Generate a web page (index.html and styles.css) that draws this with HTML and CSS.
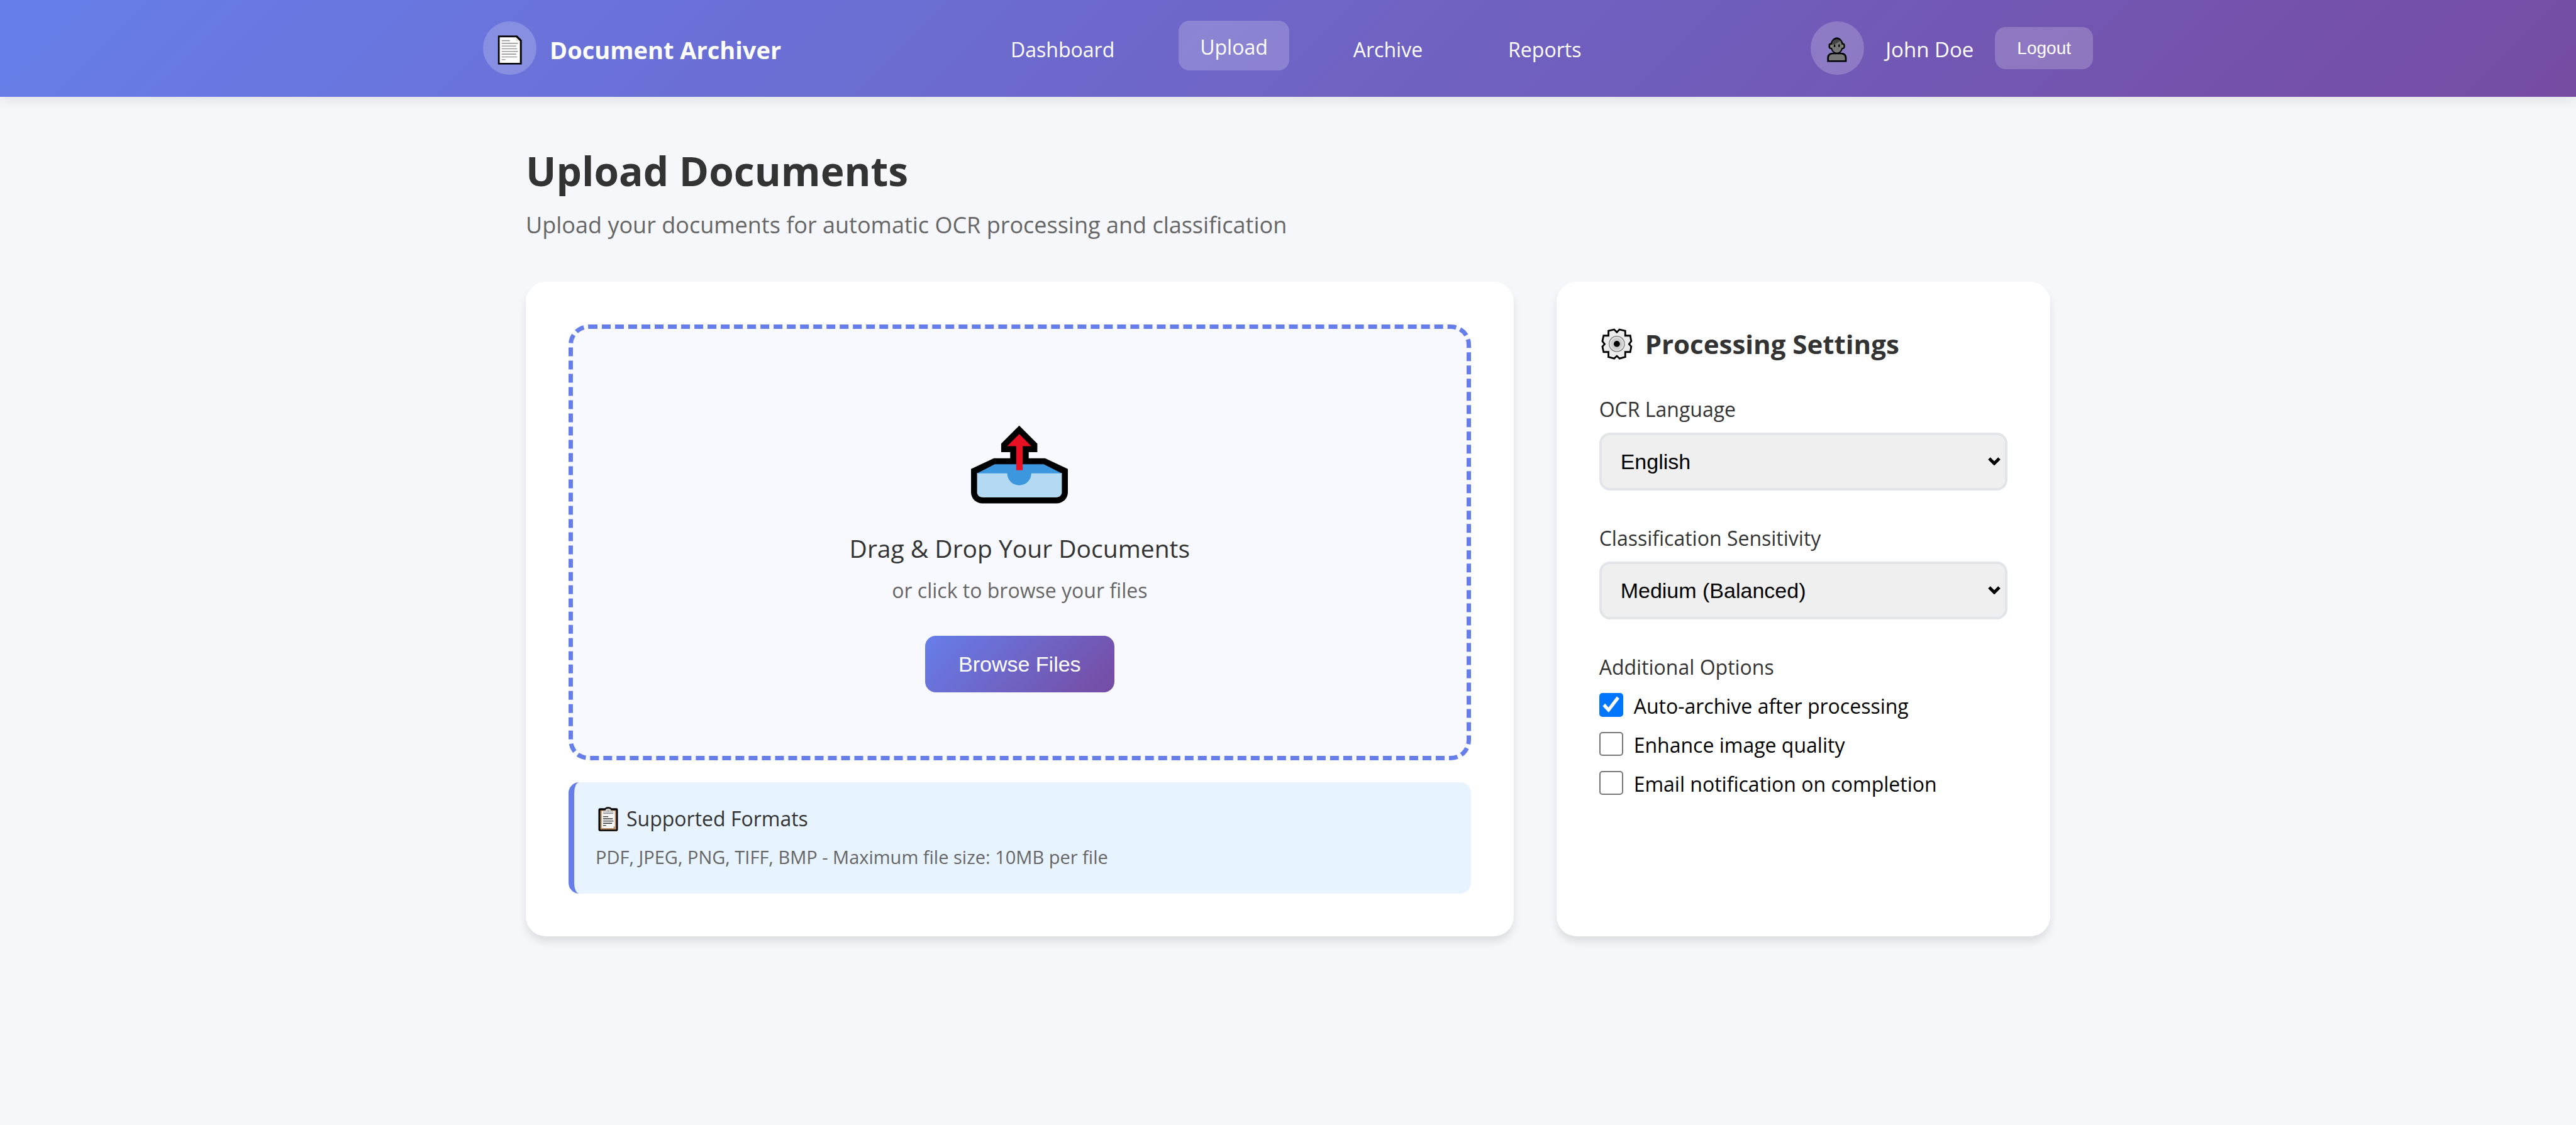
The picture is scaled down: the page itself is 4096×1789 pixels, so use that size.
FILE: index.html
```html
<!DOCTYPE html>
<html lang="en">
<head>
<meta charset="utf-8">
<meta name="viewport" content="width=device-width, initial-scale=1">
<title>Document Archiver - Upload</title>
<link rel="stylesheet" href="styles.css">
</head>
<body>
<header class="header">
  <div class="header-inner">
    <div class="logo">
      <span class="round-icon">
        <svg viewBox="75 59 375 375" aria-hidden="true">
          <path d="M180 158H315L347 190V361H180Z"/>
          <path fill="#fff" d="M192 170H306L334 198V350H192Z"/>
          <path fill="#e4e4d8" d="M306 170V198H334Z"/>
          <path stroke="#9a9a9a" stroke-width="7" d="M206 194h58M206 213h114M206 232h102M206 251h108M206 270h114M206 289h102M206 308h108M206 327h26"/>
        </svg>
      </span>
      <span class="logo-text">Document Archiver</span>
    </div>
    <nav class="nav">
      <a class="nav-link" href="#">Dashboard</a>
      <a class="nav-link active" href="#">Upload</a>
      <a class="nav-link" href="#">Archive</a>
      <a class="nav-link" href="#">Reports</a>
    </nav>
    <div class="user">
      <span class="round-icon">
        <svg viewBox="32 30 375 375" aria-hidden="true">
          <ellipse cx="216" cy="200" rx="45" ry="57"/>
          <rect x="158" y="182" width="115" height="42" rx="16"/>
          <path d="M148 315V286C148 264 164 250 188 250H245C269 250 285 264 285 286V315Z"/>
          <rect x="169" y="193" width="94" height="22" rx="5" fill="#828278"/>
          <ellipse cx="216" cy="203" rx="36" ry="47" fill="#777"/>
          <path fill="#777" d="M160 303V287C160 270 172 261 190 261H243C261 261 273 270 273 287V303Z"/>
          <path fill="#444" d="M181 193C181 168 196 156 216 156C233 156 245 164 250 178L237 168C222 180 206 191 181 193Z"/>
          <rect x="195" y="191" width="10" height="19" rx="4"/>
          <rect x="227" y="191" width="10" height="19" rx="4"/>
        </svg>
      </span>
      <span class="user-name">John Doe</span>
      <button class="logout" type="button">Logout</button>
    </div>
  </div>
</header>

<main class="main">
  <h1 class="title">Upload Documents</h1>
  <p class="subtitle">Upload your documents for automatic OCR processing and classification</p>

  <div class="grid">
    <section class="card">
      <div class="dropzone">
        <svg class="tray" viewBox="0 -77 225 266" aria-hidden="true">
          <path d="M0 101L53 76H91V62H70V42L112 0L154 42V62H134V76H172L225 101V155C225 170 213 181 198 181H27C12 181 0 170 0 155Z"/>
          <path fill="#b3daf2" d="M14 110H211V155C211 162 205 167 198 167H27C20 167 14 162 14 155Z"/>
          <path fill="#3d97de" d="M14 111L55 90H169L211 111H140A28 28 0 0 1 84 111Z"/>
          <path fill="#e81123" d="M112 20L140 48H120V104H105V48H84Z"/>
        </svg>
        <h2 class="drop-title">Drag &amp; Drop Your Documents</h2>
        <p class="drop-text">or click to browse your files</p>
        <button class="browse" type="button">Browse Files</button>
      </div>
      <div class="formats">
        <h3 class="formats-title">
          <svg class="clipboard" viewBox="37 56 177 170" aria-hidden="true">
            <path d="M68 65H104C106 59 114 56 126 56S146 59 148 65H184Q194 65 194 75V216Q194 226 184 226H68Q57 226 57 216V75Q57 65 68 65Z"/>
            <path fill="#b58a61" d="M70 79H182V215H70Z"/>
            <path fill="#f5f5f5" d="M80 84H173V192L161 205H80Z"/>
            <path fill="#d5d5c9" d="M173 192H161V205Z"/>
            <path fill="#ccc" d="M90 98V88Q90 81 98 81H106Q108 67 126 67T146 81H154Q162 81 162 88V98Z"/>
            <path stroke="#8c8c8c" stroke-width="6" d="M90 101H162"/>
            <circle cx="126" cy="84" r="4" fill="#888"/>
            <path stroke="#333" stroke-width="6" d="M90 124H126M90 139H158M90 155H163M90 171H153M90 186H111"/>
          </svg>
          Supported Formats
        </h3>
        <p class="formats-text">PDF, JPEG, PNG, TIFF, BMP - Maximum file size: 10MB per file</p>
      </div>
    </section>

    <section class="card">
      <h2 class="settings-title">
        <svg class="gear" viewBox="85 67 239 239" aria-hidden="true">
          <path fill="#ececec" stroke="#000" stroke-width="12" d="M147 97L186 88L204 106L222 88L261 97V130H295L302 168L287 187L302 204L295 241H261V275L222 285L204 268L186 285L147 275V241H114L106 204L121 187L106 168L114 130H147Z"/>
          <circle cx="204" cy="186" r="52" fill="#e0e0e0" stroke="#777" stroke-width="5"/>
          <circle cx="204" cy="186" r="40" fill="#ccc"/>
          <circle cx="204" cy="186" r="21"/>
        </svg>
        Processing Settings
      </h2>
      <div class="group">
        <label class="label" for="language">OCR Language</label>
        <div class="select-wrap">
          <select class="select" id="language"><option>English</option></select>
          <svg class="chevron" viewBox="0 0 20 13" aria-hidden="true"><path fill="none" stroke="#000" stroke-width="5" d="M2 2L10 10L18 2"/></svg>
        </div>
      </div>
      <div class="group">
        <label class="label" for="sensitivity">Classification Sensitivity</label>
        <div class="select-wrap">
          <select class="select" id="sensitivity"><option>Medium (Balanced)</option></select>
          <svg class="chevron" viewBox="0 0 20 13" aria-hidden="true"><path fill="none" stroke="#000" stroke-width="5" d="M2 2L10 10L18 2"/></svg>
        </div>
      </div>
      <fieldset class="group options">
        <legend class="label">Additional Options</legend>
        <label class="option"><input class="check" type="checkbox" checked><span>Auto-archive after processing</span></label>
        <label class="option"><input class="check" type="checkbox"><span>Enhance image quality</span></label>
        <label class="option"><input class="check" type="checkbox"><span>Email notification on completion</span></label>
      </fieldset>
    </section>
  </div>
</main>
</body>
</html>
```
FILE: styles.css
```css
* {
  box-sizing: border-box;
  margin: 0;
  padding: 0;
}

body {
  min-height: 100vh;
  background: #f5f7fa;
  color: #333;
  font-family: "Open Sans", "Noto Sans", sans-serif;
  font-size: 32px;
  line-height: 45px;
}

/* Header */
.header {
  position: relative;
  padding: 34px 0 35px;
  background: linear-gradient(135deg, #667eea 0%, #764ba2 100%);
  box-shadow: 0 4px 21px rgba(0, 0, 0, 0.1);
  color: #fff;
}

.header-inner {
  display: flex;
  align-items: center;
  justify-content: space-between;
  max-width: 2560px;
  margin: 0 auto;
}

.logo {
  display: flex;
  align-items: center;
  gap: 21px;
}

.logo-text {
  padding-top: 5px;
  font-size: 38px;
  font-weight: 700;
}

.round-icon {
  width: 85px;
  height: 85px;
  border-radius: 50%;
  background: rgba(255, 255, 255, 0.2);
}

.round-icon svg {
  display: block;
  width: 100%;
  height: 100%;
}

.nav {
  display: flex;
  gap: 68px;
}

.nav-link {
  padding: 19px 34px 15px;
  border-radius: 17px;
  color: #fff;
  text-decoration: none;
}

.nav-link.active {
  background: rgba(255, 255, 255, 0.2);
  transform: translateY(-4px);
}

.user {
  display: flex;
  align-items: center;
  gap: 34px;
}

.user-name {
  padding-top: 4px;
  font-size: 33px;
}

.logout {
  padding: 17px 35px;
  border: 0;
  border-radius: 17px;
  background: rgba(255, 255, 255, 0.2);
  color: #fff;
  font: 28px/33px "Liberation Sans", sans-serif;
}

/* Page */
.main {
  max-width: 2560px;
  margin: 0 auto;
  padding: 68px;
}

.title {
  margin-bottom: 12px;
  font-size: 64px;
  line-height: 99px;
}

.subtitle {
  margin-bottom: 65px;
  color: #666;
  font-size: 36px;
  line-height: 50px;
}

.grid {
  display: grid;
  grid-template-columns: 2fr 1fr;
  gap: 68px;
}

.card {
  padding: 68px;
  border-radius: 32px;
  background: #fff;
  box-shadow: 0 9px 13px rgba(0, 0, 0, 0.1);
}

/* Drop zone */
.dropzone {
  display: flex;
  flex-direction: column;
  align-items: center;
  margin-bottom: 35px;
  padding: 101px;
  border: 7px dashed #667eea;
  border-radius: 32px;
  background: #f8f9ff;
}

.tray {
  width: 154px;
  height: 182px;
  margin-bottom: 34px;
}

.drop-title {
  margin-bottom: 12px;
  font-size: 39px;
  font-weight: 400;
  line-height: 64px;
}

.drop-text {
  margin-bottom: 49px;
  color: #666;
  line-height: 46px;
}

.browse {
  padding: 26px 53px;
  border: 0;
  border-radius: 17px;
  background: linear-gradient(135deg, #667eea 0%, #764ba2 100%);
  color: #fff;
  font: 34px/38px "Liberation Sans", sans-serif;
}

/* Supported formats */
.formats {
  padding: 34px 34px 37px;
  border-left: 9px solid #667eea;
  border-radius: 17px;
  background: #e7f3ff;
}

.formats-title {
  display: flex;
  align-items: center;
  gap: 9px;
  margin-bottom: 16px;
  font-size: 32px;
  font-weight: 400;
  line-height: 48px;
}

.clipboard {
  width: 40px;
  height: 39px;
}

.formats-text {
  color: #666;
  font-size: 29px;
  line-height: 42px;
}

/* Settings */
.settings-title {
  display: flex;
  align-items: center;
  gap: 17px;
  margin-bottom: 51px;
  font-size: 42px;
  line-height: 62px;
}

.gear {
  width: 56px;
  height: 56px;
}

.group {
  margin-bottom: 54px;
  border: 0;
}

.label {
  display: block;
  margin-bottom: 15px;
  line-height: 44px;
}

.select-wrap {
  position: relative;
}

.select {
  display: block;
  width: 100%;
  height: 92px;
  padding: 0 30px;
  appearance: none;
  border: 4px solid #e1e5e9;
  border-radius: 17px;
  background: #efefef;
  color: #000;
  font: 34px "Liberation Sans", sans-serif;
}

.chevron {
  position: absolute;
  top: 39px;
  right: 11px;
  width: 20px;
  height: 13px;
  pointer-events: none;
}

.options {
  display: flex;
  flex-direction: column;
  gap: 17px;
  margin-bottom: 0;
}

.option {
  display: flex;
  align-items: center;
  gap: 17px;
  color: #000;
}

.option span {
  padding-top: 4px;
  line-height: 41px;
}

.check {
  width: 38px;
  height: 38px;
  appearance: none;
  border: 2px solid #767676;
  border-radius: 5px;
  background: #fff;
}

.check:checked {
  border-color: #0075ff;
  background: #0075ff;
}

.check:checked::before {
  content: "";
  display: block;
  width: 100%;
  height: 100%;
  background: #fff;
  clip-path: polygon(11% 57%, 22% 45%, 38% 63%, 77% 12%, 89% 22%, 39% 87%);
}
```
